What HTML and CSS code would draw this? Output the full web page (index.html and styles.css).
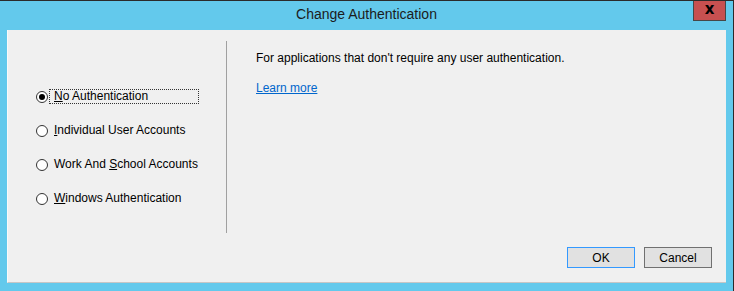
FILE: index.html
```html
<!doctype html>
<html lang="en">
	<head>
		<meta charset="UTF-8" />
		<meta name="viewport" content="width=device-width, initial-scale=1.0" />
		<title>Change Authentication</title>
		<link rel="stylesheet" href="styles.css">
	</head>
	<body>
		<div class="window">
			<div class="titlebar">
				<h1 class="title">Change Authentication</h1>
				<button type="button" class="close">x</button>
			</div>

			<div class="panel">
				<div class="main">
					<div class="options">
						<label class="option">
							<span class="radio checked"></span>
							<span class="label focused"><u>N</u>o Authentication</span>
						</label>
						<label class="option">
							<span class="radio"></span>
							<span class="label"><u>I</u>ndividual User Accounts</span>
						</label>
						<label class="option">
							<span class="radio"></span>
							<span class="label">Work And <u>S</u>chool Accounts</span>
						</label>
						<label class="option">
							<span class="radio"></span>
							<span class="label"><u>W</u>indows Authentication</span>
						</label>
					</div>

					<div class="divider"></div>

					<div class="details">
						<p>For applications that don't require any user authentication.</p>
						<a href="#">Learn more</a>
					</div>
				</div>

				<div class="footer">
					<button type="button" class="btn default">OK</button>
					<button type="button" class="btn">Cancel</button>
				</div>
			</div>
		</div>
	</body>
</html>
```

FILE: styles.css
```css
html,
body,
h1,
p {
	margin: 0;
	padding: 0;
}

body {
	font-family: "Liberation Sans", Arial, sans-serif;
	font-size: 12px;
	color: #000;
	background: #63c9ec;
}

.window {
	box-sizing: border-box;
	width: 734px;
	height: 291px;
	display: flex;
	flex-direction: column;
	background: #63c9ec;
	border-top: 1px solid #2b2b2b;
	border-right: 1px solid #2b2b2b;
}

.titlebar {
	height: 29px;
	display: grid;
	grid-template-columns: 1fr auto 1fr;
	align-items: start;
}

.title {
	grid-column: 2;
	font-size: 14px;
	font-weight: normal;
	line-height: 27px;
	color: #1c1c1c;
}

.close {
	grid-column: 3;
	justify-self: end;
	width: 33px;
	height: 20px;
	margin: 0 7px 0 0;
	padding: 0 0 2px;
	border: 1px solid #474747;
	border-top: none;
	background: #c75050;
	font-family: "DejaVu Sans", sans-serif;
	font-size: 15px;
	font-weight: bold;
	line-height: 15px;
	color: #000;
}

.panel {
	box-sizing: border-box;
	height: 253px;
	margin: 0 7px 0 7px;
	display: flex;
	flex-direction: column;
	background: #f0f0f0;
	border-left: 1px solid #fafafa;
	border-bottom: 1px solid #c6c6c6;
}

.main {
	display: flex;
	padding-top: 11px;
}

.options {
	width: 190px;
	padding: 48px 0 0 28px;
	display: flex;
	flex-direction: column;
	gap: 19px;
}

.option {
	display: flex;
	align-items: center;
	height: 15px;
}

.radio {
	box-sizing: border-box;
	width: 12px;
	height: 12px;
	border: 1px solid #333;
	border-radius: 50%;
	background: #fff;
	display: flex;
	align-items: center;
	justify-content: center;
}

.radio.checked::after {
	content: "";
	width: 6px;
	height: 6px;
	border-radius: 50%;
	background: #000;
}

.label {
	box-sizing: border-box;
	width: 150px;
	height: 15px;
	margin-left: 1px;
	padding-left: 4px;
	line-height: 13px;
	border: 1px dotted transparent;
	white-space: nowrap;
}

.label.focused {
	border-color: #333;
}

.label u {
	text-underline-offset: 1px;
}

.divider {
	width: 1px;
	height: 192px;
	background: #a0a0a0;
}

.details {
	padding: 9px 0 0 29px;
	display: flex;
	flex-direction: column;
	align-items: flex-start;
	line-height: 16px;
}

.details p {
	margin-bottom: 14px;
}

.details a {
	color: #0066cc;
}

.footer {
	margin-top: auto;
	padding: 0 14px 14px 0;
	display: flex;
	justify-content: flex-end;
	gap: 9px;
}

.btn {
	box-sizing: border-box;
	width: 68px;
	height: 21px;
	padding: 0;
	border: 1px solid #707070;
	background: #e1e1e1;
	font-family: "Liberation Sans", Arial, sans-serif;
	font-size: 12px;
	color: #000;
}

.btn.default {
	border-color: #3399ff;
}
```
